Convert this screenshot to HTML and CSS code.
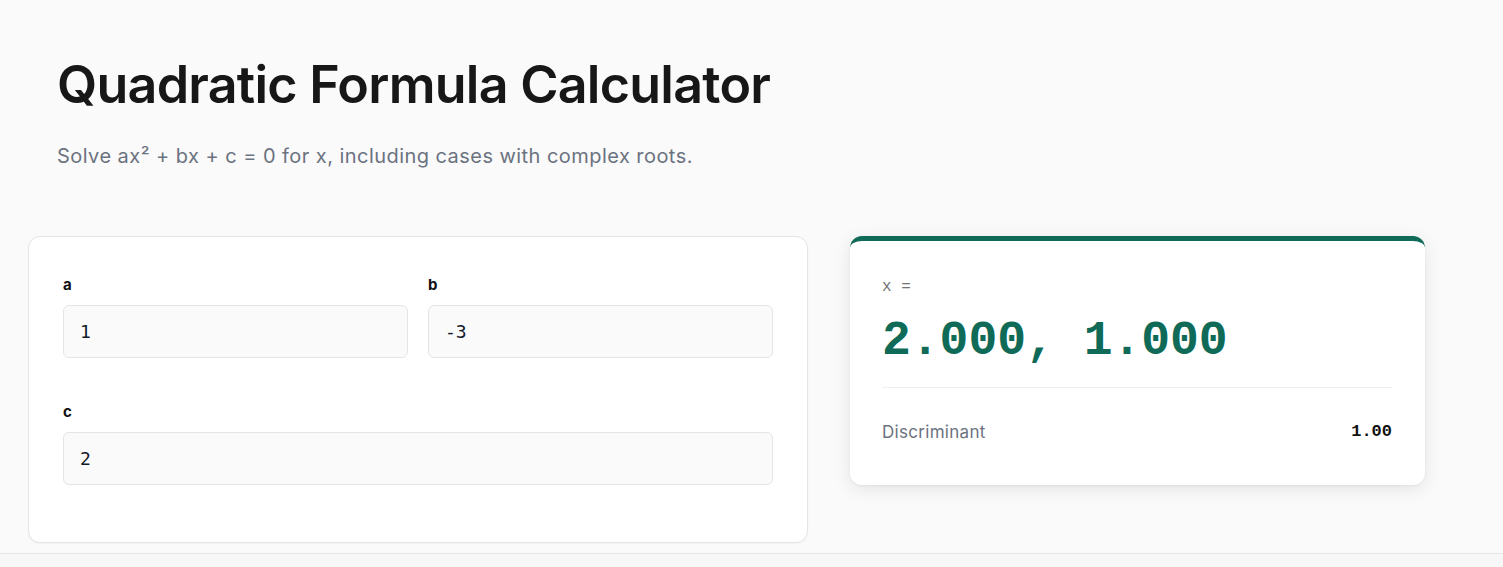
FILE: index.html
```html
<!DOCTYPE html>
<html lang="en">
<head>
<meta charset="utf-8">
<title>Quadratic Formula Calculator</title>
<link rel="stylesheet" href="styles.css">
</head>
<body>
<main class="page">
  <header class="header">
    <h1 class="title">Quadratic Formula Calculator</h1>
    <p class="subtitle">Solve ax² + bx + c = 0 for x, including cases with complex roots.</p>
  </header>
  <section class="layout">
    <div class="card inputs">
      <div class="field">
        <label class="label" for="a">a</label>
        <input class="input" id="a" type="text" value="1">
      </div>
      <div class="field">
        <label class="label" for="b">b</label>
        <input class="input" id="b" type="text" value="-3">
      </div>
      <div class="field field-wide">
        <label class="label" for="c">c</label>
        <input class="input" id="c" type="text" value="2">
      </div>
    </div>
    <div class="card result">
      <div class="result-label">x =</div>
      <div class="result-value">2.000, 1.000</div>
      <div class="result-row">
        <span class="row-label">Discriminant</span>
        <span class="row-value">1.00</span>
      </div>
    </div>
  </section>
  <footer class="footer"></footer>
</main>
</body>
</html>
```

FILE: styles.css
```css
* { box-sizing: border-box; }
html, body { margin: 0; padding: 0; }
body {
  background: #fafafa;
  font-family: Inter, "Noto Sans", sans-serif;
  color: #171717;
}
.page { min-height: 567px; }
.header { padding: 49px 29px 0 57px; }
.title {
  margin: 0;
  font-size: 52px;
  line-height: 72px;
  font-weight: 600;
  letter-spacing: -0.75px;
  color: #171717;
}
.subtitle {
  margin: 21px 0 0;
  font-size: 20px;
  line-height: 28px;
  letter-spacing: 0.45px;
  color: #6b7280;
}
.layout {
  display: grid;
  grid-template-columns: 780px 575px;
  gap: 42px;
  align-items: start;
  margin: 66px 0 0 28px;
}
.card {
  background: #fff;
  border: 1px solid #e5e5e5;
  border-radius: 12px;
}
.inputs {
  display: grid;
  grid-template-columns: 1fr 1fr;
  gap: 44px 20px;
  padding: 38px 34px 57px;
  box-shadow: 0 1px 2px rgba(0,0,0,0.04);
}
.field-wide { grid-column: 1 / -1; }
.label {
  display: block;
  font-size: 15px;
  line-height: 20px;
  font-weight: 700;
  color: #111;
  margin-bottom: 10px;
}
.input {
  display: block;
  width: 100%;
  height: 53px;
  padding: 0 16px;
  background: #fafafa;
  border: 1px solid #e5e5e5;
  border-radius: 6px;
  font-family: "DejaVu Sans Mono", monospace;
  font-size: 18px;
  color: #111827;
  outline: none;
}
.result {
  border: none;
  border-top: 5px solid #0f6b57;
  padding: 36px 33px 41px 32px;
  box-shadow: 0 4px 18px rgba(0,0,0,0.09), 0 1px 3px rgba(0,0,0,0.05);
}
.result-label {
  font-family: "Liberation Mono", monospace;
  font-size: 16px;
  line-height: 20px;
  color: #737373;
}
.result-value {
  margin-top: 14px;
  font-family: "Liberation Mono", "DejaVu Sans Mono", monospace;
  font-weight: 700;
  font-size: 48px;
  line-height: 60px;
  color: #0f6b57;
  padding-bottom: 16px;
  border-bottom: 1px solid #efefef;
}
.result-row {
  display: flex;
  justify-content: space-between;
  align-items: center;
  padding-top: 32px;
  line-height: 24px;
}
.row-label {
  font-size: 17px;
  letter-spacing: 0.3px;
  color: #6b7280;
}
.row-value {
  font-family: "Liberation Mono", monospace;
  font-weight: 700;
  font-size: 17px;
  color: #111;
}
.footer {
  margin-top: 10px;
  border-top: 1px solid #e5e5e5;
  background: #f7f7f7;
  height: 40px;
}
```
